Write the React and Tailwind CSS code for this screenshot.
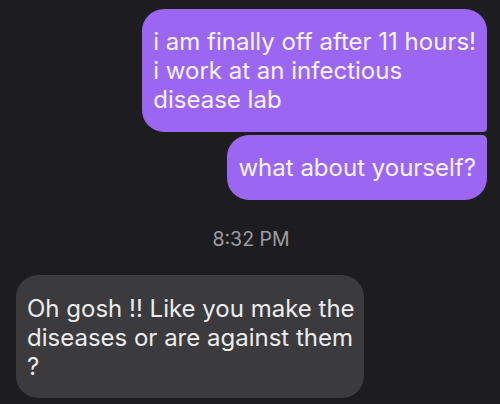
import React from 'react';

function Bubble({ lines, mine, className = '' }) {
    return (
        <div
            className={
                'w-fit px-[11px] py-[18px] text-[24px] leading-[29px] ' +
                (mine ? 'bg-[#9b67f2] text-[#f7f3ff] ' : 'bg-[#3b3b3d] text-[#ececec] ') +
                className
            }
        >
            {lines.map((l, i) => (
                <div key={i} className="whitespace-nowrap">{l}</div>
            ))}
        </div>
    );
}

export default function App() {
    return (
        <div className="w-[500px] h-[404px] overflow-hidden bg-[#1d1d1f] font-['Inter',sans-serif] pt-[9px]">
            <div className="flex flex-col items-end gap-[3px] pr-[13px]">
                <Bubble
                    mine
                    className="rounded-[22px] rounded-br-[4px]"
                    lines={['i am finally off after 11 hours!', 'i work at an infectious', 'disease lab']}
                />
                <Bubble
                    mine
                    className="rounded-[22px] rounded-tr-[5px] py-[17px]"
                    lines={['what about yourself?']}
                />
            </div>
            <div className="text-center text-[19.5px] text-[#9d9da2] mt-[25px] pl-[2px]">8:32 PM</div>
            <div className="pl-4 mt-[21px]">
                <Bubble
                    className="rounded-[22px] pr-[9px] pt-[19px] pb-[17px]"
                    lines={['Oh gosh !! Like you make the', 'diseases or are against them', '?']}
                />
            </div>
        </div>
    );
}
